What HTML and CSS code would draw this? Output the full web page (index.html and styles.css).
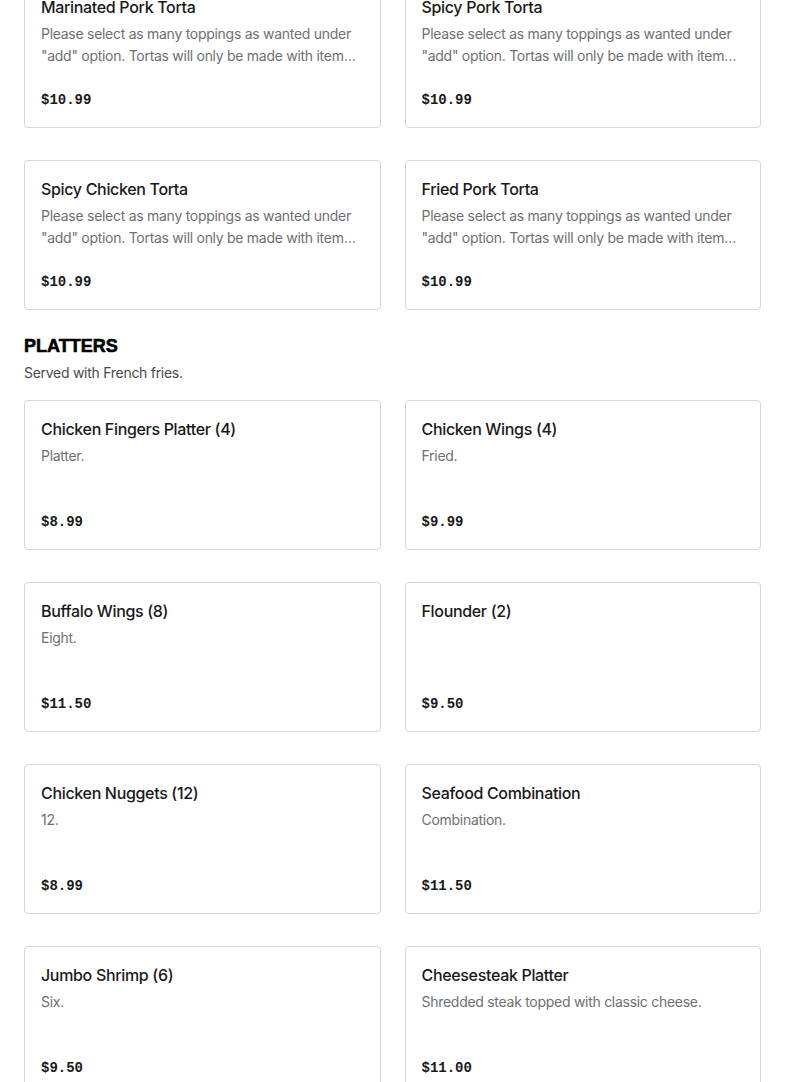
FILE: index.html
```html
<!DOCTYPE html>
<html lang="en">
<head>
<meta charset="utf-8">
<title>Menu</title>
<link rel="stylesheet" href="styles.css">
</head>
<body>
<main class="page">
  <section class="section">
    <div class="grid">
      <div class="card">
        <h3 class="card-title">Marinated Pork Torta</h3>
        <p class="card-desc">Please select as many toppings as wanted under "add" option. Tortas will only be made with item…</p>
        <div class="card-price">$10.99</div>
      </div>
      <div class="card">
        <h3 class="card-title">Spicy Pork Torta</h3>
        <p class="card-desc">Please select as many toppings as wanted under "add" option. Tortas will only be made with item…</p>
        <div class="card-price">$10.99</div>
      </div>
      <div class="card">
        <h3 class="card-title">Spicy Chicken Torta</h3>
        <p class="card-desc">Please select as many toppings as wanted under "add" option. Tortas will only be made with item…</p>
        <div class="card-price">$10.99</div>
      </div>
      <div class="card">
        <h3 class="card-title">Fried Pork Torta</h3>
        <p class="card-desc">Please select as many toppings as wanted under "add" option. Tortas will only be made with item…</p>
        <div class="card-price">$10.99</div>
      </div>
    </div>
  </section>

  <section class="section">
    <h2 class="section-title">PLATTERS</h2>
    <p class="section-sub">Served with French fries.</p>
    <div class="grid">
      <div class="card">
        <h3 class="card-title">Chicken Fingers Platter (4)</h3>
        <p class="card-desc">Platter.</p>
        <div class="card-price">$8.99</div>
      </div>
      <div class="card">
        <h3 class="card-title">Chicken Wings (4)</h3>
        <p class="card-desc">Fried.</p>
        <div class="card-price">$9.99</div>
      </div>
      <div class="card">
        <h3 class="card-title">Buffalo Wings (8)</h3>
        <p class="card-desc">Eight.</p>
        <div class="card-price">$11.50</div>
      </div>
      <div class="card">
        <h3 class="card-title">Flounder (2)</h3>
        <div class="card-price">$9.50</div>
      </div>
      <div class="card">
        <h3 class="card-title">Chicken Nuggets (12)</h3>
        <p class="card-desc">12.</p>
        <div class="card-price">$8.99</div>
      </div>
      <div class="card">
        <h3 class="card-title">Seafood Combination</h3>
        <p class="card-desc">Combination.</p>
        <div class="card-price">$11.50</div>
      </div>
      <div class="card">
        <h3 class="card-title">Jumbo Shrimp (6)</h3>
        <p class="card-desc">Six.</p>
        <div class="card-price">$9.50</div>
      </div>
      <div class="card">
        <h3 class="card-title">Cheesesteak Platter</h3>
        <p class="card-desc">Shredded steak topped with classic cheese.</p>
        <div class="card-price">$11.00</div>
      </div>
    </div>
  </section>
</main>
</body>
</html>
```

FILE: styles.css
```css
* { box-sizing: border-box; }
html, body { margin: 0; padding: 0; background: #fff; }
body {
  font-family: Inter, "Noto Sans", "Liberation Sans", sans-serif;
  color: #191919;
  overflow: hidden;
}
.page {
  padding: 0 24px;
  margin-top: -22px;
}
.grid {
  display: grid;
  grid-template-columns: 1fr 1fr;
  column-gap: 24px;
  row-gap: 32px;
}
.card {
  height: 150px;
  border: 1px solid #d6d6d6;
  border-radius: 4px;
  padding: 16px;
  display: flex;
  flex-direction: column;
}
.card-title {
  margin: 0;
  font-size: 16px;
  font-weight: 500;
  line-height: 24px;
  letter-spacing: -0.33px;
  color: #191919;
}
.card-desc {
  margin: 4px 0 0;
  font-size: 14px;
  line-height: 22px;
  letter-spacing: -0.28px;
  color: #6f6f6f;
  display: -webkit-box;
  -webkit-line-clamp: 2;
  -webkit-box-orient: vertical;
  overflow: hidden;
}
.card-price {
  margin-top: auto;
  font-family: "Liberation Mono", "DejaVu Sans Mono", monospace;
  font-weight: 700;
  font-size: 14px;
  line-height: 22px;
  color: #191919;
}
.section-title {
  margin: 24px 0 0;
  font-family: "Liberation Sans", Arial, sans-serif;
  font-weight: 900;
  font-size: 18px;
  line-height: 24px;
  color: #000;
  -webkit-text-stroke: 0.6px #000;
}
.section-sub {
  margin: 4px 0 16px;
  font-size: 14px;
  line-height: 22px;
  letter-spacing: -0.28px;
  color: #494949;
}
```
